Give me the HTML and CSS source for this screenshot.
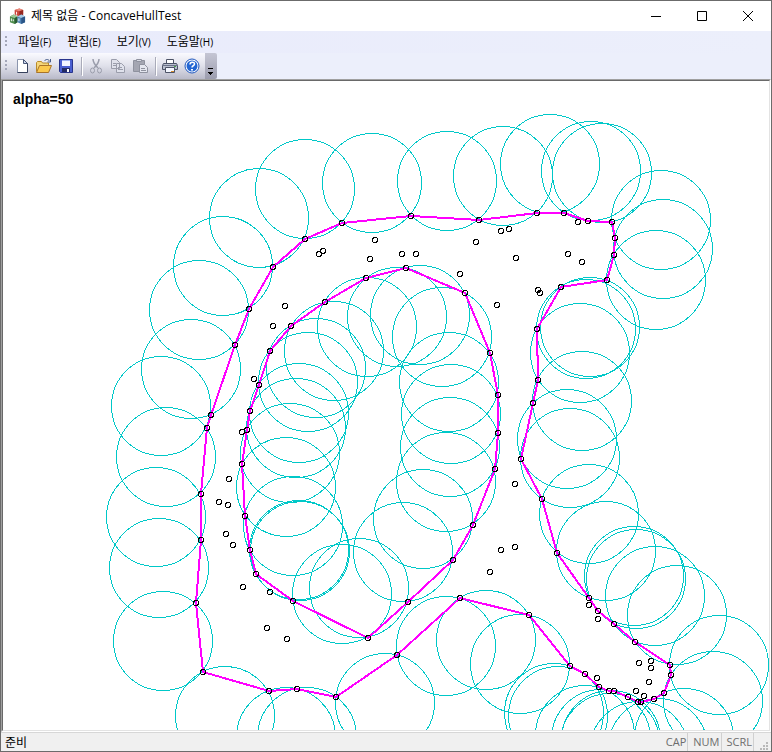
FILE: index.html
```html
<!DOCTYPE html>
<html lang="ko">
<head>
    <meta charset="UTF-8">
    <meta name="viewport" content="width=device-width, initial-scale=1.0">
    <title>제목 없음 - ConcaveHullTest</title>
    <link rel="stylesheet" href="styles.css">
</head>
<body>
    <div class="window">
        <header class="titlebar">
            <svg class="app-icon" viewBox="0 0 18 18" aria-hidden="true">
                <path d="M6 2l5-1.500 4 1.500v5l-4 2-5-2z" fill="#c8453a"/>
                <path d="M6 2l5-1.500 4 1.500-4 1.500z" fill="#e98a7c"/>
                <path d="M11 3.500l4-1.500v5l-4 2z" fill="#96271f"/>
                <path d="M1 9l4-2 4 2v6l-3 2-5-2z" fill="#4d8c4b"/>
                <path d="M1 9l4-2 4 2-3 1.500z" fill="#9cc795"/>
                <path d="M6 10.500l3-1.500v6l-3 2z" fill="#285b32"/>
                <path d="M9 9l4-2 4 2v6l-4 2-4-2z" fill="#4f83b5"/>
                <path d="M9 9l4-2 4 2-4 1.500z" fill="#a8cbe5"/>
                <path d="M13 10.500l4-1.500v6l-4 2z" fill="#2b5688"/>
                <path d="M8 4v3M2.500 11v3M4.500 12v2M10.500 11v3" stroke="#fff" stroke-width="1"/>
            </svg>
            <h1>제목 없음 - ConcaveHullTest</h1>
            <div class="window-buttons">
                <button type="button" aria-label="최소화">
                    <svg viewBox="0 0 10 10"><path d="M0 5.500h10"/></svg>
                </button>
                <button type="button" aria-label="최대화">
                    <svg viewBox="0 0 10 10"><path d="M.5.5h9v9h-9z"/></svg>
                </button>
                <button type="button" aria-label="닫기">
                    <svg viewBox="0 0 10 10"><path d="M0 0l10 10M10 0L0 10"/></svg>
                </button>
            </div>
        </header>

        <nav class="menubar">
            <span class="grip"></span>
            <button type="button">파일<small>(F)</small></button>
            <button type="button">편집<small>(E)</small></button>
            <button type="button">보기<small>(V)</small></button>
            <button type="button">도움말<small>(H)</small></button>
        </nav>

        <div class="toolbar-row">
            <div class="toolbar">
                <span class="grip"></span>
                <button type="button" aria-label="새로 만들기">
                    <svg viewBox="0 0 16 16">
                        <path d="M3.500 1.500h6l4 4v9h-10z" fill="#fff" stroke="#8b95ad"/>
                        <path d="M13.500 5v9.500h-10" fill="none" stroke="#36415c"/>
                        <path d="M9.500 1.500v4h4z" fill="#cbd6ec" stroke="#4a5878"/>
                    </svg>
                </button>
                <button type="button" aria-label="열기">
                    <svg viewBox="0 0 16 16">
                        <path d="M.5 13.500v-9l1-1h4l1 1.500h6v3" fill="#f5d77c" stroke="#b98a2b"/>
                        <path d="M.5 14.500l3-7h12l-3 7z" fill="#fbc94d" stroke="#a8742a"/>
                        <path d="M8.500 3c1-2 4-2 5 0M14.500 1v3h-3" fill="none" stroke="#4a5f8c"/>
                    </svg>
                </button>
                <button type="button" aria-label="저장">
                    <svg viewBox="0 0 16 16">
                        <path d="M1.500 1.500h13v13h-12l-1-1z" fill="#4a5fd0" stroke="#28348c"/>
                        <path d="M4 2h8v6H4z" fill="#f2f5ff"/>
                        <path d="M4 2h8v1H4z" fill="#9fb2f0"/>
                        <path d="M4 10h8v4H4z" fill="#232b63"/>
                        <path d="M9 11h2v3H9z" fill="#fff"/>
                    </svg>
                </button>
                <span class="separator"></span>
                <button type="button" disabled aria-label="잘라내기">
                    <svg viewBox="0 0 16 16" fill="none" stroke="#9a9dab">
                        <path d="M5 1c0 4 2 6 5 9M11 1c0 4-2 6-5 9" stroke-width="1.500"/>
                        <ellipse cx="4.500" cy="12.500" rx="2" ry="2.500"/>
                        <ellipse cx="11.500" cy="12.500" rx="2" ry="2.500"/>
                    </svg>
                </button>
                <button type="button" disabled aria-label="복사">
                    <svg viewBox="0 0 16 16" fill="#e0e2ec" stroke="#9a9dab">
                        <path d="M1.500 1.500h5l3 3v6h-8zM6.500 5.500h5l3 3v6h-8z"/>
                        <path d="M3 5.500h3M3 7.500h3M8 9.500h4M8 11.500h5"/>
                    </svg>
                </button>
                <button type="button" disabled aria-label="붙여넣기">
                    <svg viewBox="0 0 16 16" stroke="#8f929f">
                        <path d="M1.500 2.500h11v11h-11z" fill="#a4a6b2"/>
                        <path d="M4.500 1.500h5v2h-5z" fill="#d8dae4"/>
                        <path d="M7.500 6.500h5l3 3v5h-8z" fill="#e4e6ef"/>
                        <path d="M9 10.500h4M9 12.500h5"/>
                    </svg>
                </button>
                <span class="separator"></span>
                <button type="button" aria-label="인쇄">
                    <svg viewBox="0 0 16 16" stroke="#4c5366">
                        <path d="M4.500 6V1.500h7V6" fill="#fff"/>
                        <path d="M1.500 5.500h13l1 2v4H.5v-4z" fill="#b9bfce"/>
                        <path d="M3.500 9.500h9v5h-9z" fill="#f4f7ff"/>
                        <path d="M1 7.500h14" stroke="#6c7389"/>
                        <path d="M9 13.500h3" stroke="#d38b2f"/>
                        <path d="M12 8.500h2" stroke="#45a045"/>
                    </svg>
                </button>
                <button type="button" aria-label="도움말">
                    <svg viewBox="0 0 16 16">
                        <circle cx="8" cy="8" r="7" fill="#fff" stroke="#1d55bd"/>
                        <circle cx="8" cy="8" r="5.500" fill="#2467d3"/>
                        <path d="M6 6.500c0-3 4.500-3 4.500-.5C10.500 8 8 7.500 8 9.500" fill="none" stroke="#fff" stroke-width="1.500"/>
                        <path d="M7 11h2v1.500H7z" fill="#fff"/>
                    </svg>
                </button>
            </div>
            <button type="button" class="toolbar-more" aria-label="도구 모음 옵션">
                <svg viewBox="0 0 6 7">
                    <path d="M0 0h5v1H0z"/>
                    <path d="M0 4h5v1H4v1H3v1H2V6H1V5H0z"/>
                </svg>
            </button>
        </div>

        <main class="view">
            <svg class="plot" id="plot">
                <text class="alpha" x="10" y="23">alpha=50</text>
                <g id="drawing" transform="translate(-3 -81)"></g>
            </svg>
        </main>

        <footer class="statusbar">
            <span class="message">준비</span>
            <span class="pane">CAP</span>
            <span class="pane">NUM</span>
            <span class="pane">SCRL</span>
            <svg class="size-grip" viewBox="0 0 9 9" aria-hidden="true">
                <path d="M6 0h2v2H6zM3 3h2v2H3zM6 3h2v2H6zM0 6h2v2H0zM3 6h2v2H3zM6 6h2v2H6z"/>
            </svg>
        </footer>
    </div>

    <script src="script.js"></script>
</body>
</html>
```

FILE: styles.css
```css
* {
    margin: 0;
    padding: 0;
    box-sizing: border-box;
}

body {
    font-family: "Open Sans", "Noto Sans CJK KR", sans-serif;
    font-size: 12px;
    color: #000;
}

button {
    border: none;
    background: none;
    font: inherit;
    color: inherit;
}

.window {
    display: flex;
    flex-direction: column;
    min-height: 100vh;
    border: 1px solid #6b6b6b;
    background: #fff;
}

.titlebar {
    display: flex;
    align-items: center;
    height: 30px;
    padding-left: 8px;
}

.app-icon {
    width: 17px;
    height: 17px;
    margin-right: 5px;
}

.titlebar h1 {
    flex: 1;
    font-size: 12px;
    font-weight: normal;
    line-height: 16px;
    white-space: nowrap;
}

.window-buttons {
    display: flex;
}

.window-buttons button {
    display: flex;
    align-items: center;
    justify-content: center;
    width: 46px;
    height: 30px;
}

.window-buttons svg {
    width: 10px;
    height: 10px;
    fill: none;
    stroke: #000;
    overflow: visible;
}

.menubar {
    display: flex;
    align-items: center;
    gap: 16px;
    height: 22px;
    padding-left: 4px;
    background: linear-gradient(90deg, #e9ebfb, #eceffb);
}

.menubar button {
    line-height: 20px;
    white-space: nowrap;
}

.menubar small {
    font-family: "Open Sans", sans-serif;
    font-size: 10px;
}

.grip {
    width: 2px;
    height: 12px;
    background: repeating-linear-gradient(#a3a6b8 0 2px, transparent 2px 4px);
}

.menubar .grip {
    margin-right: -5px;
}

.toolbar-row {
    display: flex;
    height: 26px;
    background: #eceffb;
}

.toolbar {
    display: flex;
    align-items: center;
    padding-left: 4px;
    padding-right: 2px;
    background: linear-gradient(#fafaff, #dfe0ea 50%, #b9bac9);
}

.toolbar .grip {
    margin-right: 4px;
}

.toolbar button {
    display: flex;
    align-items: center;
    justify-content: center;
    width: 22px;
    height: 22px;
}

.toolbar button svg {
    width: 16px;
    height: 16px;
}

.separator {
    width: 1px;
    height: 18px;
    margin: 0 3px 0 4px;
    background: #a9abb9;
    box-shadow: 1px 1px #fff;
}

.toolbar-more {
    display: flex;
    align-items: flex-end;
    justify-content: center;
    width: 12px;
    padding-bottom: 4px;
    border-radius: 0 2px 2px 0;
    background: linear-gradient(#c5c6d4, #9c9dae);
}

.toolbar-more svg {
    width: 6px;
    height: 7px;
}

.view {
    display: flex;
    flex: 1;
    border: 1px solid #a0a0a0;
    border-right-color: #fff;
    border-bottom-color: #fff;
}

.plot {
    flex: 1;
    height: auto;
    min-height: 648px;
    border: 1px solid #696969;
    border-right-color: #e3e3e3;
    border-bottom-color: #e3e3e3;
    shape-rendering: crispEdges;
}

.alpha {
    font-family: "Liberation Sans", Arial, sans-serif;
    font-size: 14px;
    font-weight: bold;
}

.alpha-circle {
    fill: none;
    stroke: #00c8c8;
}

.hull {
    fill: none;
    stroke: #f0f;
    stroke-width: 2px;
}

.point {
    fill: none;
    stroke: #000;
}

.statusbar {
    display: flex;
    align-items: center;
    height: 19px;
    padding-left: 4px;
    padding-right: 2px;
    border-top: 1px solid #d7d7d7;
    background: #f0f0f0;
}

.message {
    flex: 1;
}

.pane {
    padding: 0 1px 0 5px;
    border-right: 1px solid #d0d0d0;
    font-size: 11px;
    line-height: 18px;
    color: #6d6d6d;
}

.size-grip {
    align-self: flex-end;
    width: 9px;
    height: 9px;
    margin-left: 6px;
    fill: #b8b8b8;
}
```

FILE: script.js
```javascript
const SVG_NS = 'http://www.w3.org/2000/svg';
const ALPHA = 50;

const outerHull = [
    [342, 223], [411, 216], [479, 220], [537, 213], [564, 213], [588, 221], [612, 222],
    [615, 238], [614, 255], [607, 280], [561, 287], [537, 329], [538, 380], [533, 403],
    [521, 459], [542, 499], [557, 553], [589, 598], [598, 611], [614, 624], [635, 642],
    [670, 665], [671, 675], [664, 693], [654, 699], [641, 702], [638, 702], [628, 697],
    [614, 691], [609, 691], [599, 687], [585, 674], [570, 666], [529, 615], [460, 598],
    [397, 655], [336, 697], [297, 689], [269, 691], [203, 672], [196, 603], [201, 540],
    [201, 494], [207, 428], [211, 415], [235, 345], [249, 309], [273, 267], [305, 239]
];

const innerHull = [
    [406, 268], [366, 278], [325, 302], [291, 326], [270, 351], [259, 385], [250, 411],
    [247, 430], [242, 464], [245, 516], [250, 550], [256, 574], [293, 601], [368, 638],
    [408, 602], [453, 560], [473, 525], [495, 469], [498, 433], [498, 395], [490, 353],
    [465, 293]
];

const innerPoints = [
    [319, 254], [323, 251], [375, 240], [370, 259], [402, 254], [416, 254], [476, 242],
    [501, 231], [509, 229], [516, 258], [460, 274], [497, 305], [538, 290], [540, 293],
    [568, 254], [582, 262], [578, 222], [285, 306], [273, 326], [254, 379], [242, 432],
    [229, 479], [219, 502], [228, 505], [226, 534], [233, 545], [243, 587], [270, 592],
    [267, 628], [287, 639], [515, 484], [515, 547], [501, 550], [490, 572], [589, 605],
    [598, 619], [639, 663], [651, 661], [651, 668], [649, 682], [636, 691], [644, 696],
    [597, 678]
];

const drawing = document.getElementById('drawing');

function add(name, attrs) {
    const el = document.createElementNS(SVG_NS, name);
    for (const key in attrs) {
        el.setAttribute(key, attrs[key]);
    }
    drawing.appendChild(el);
}

// Circle of radius alpha through both ends of an edge, on the empty side
function circleCenter(a, b) {
    const dx = b[0] - a[0];
    const dy = b[1] - a[1];
    const length = Math.hypot(dx, dy);
    const height = Math.sqrt(ALPHA * ALPHA - length * length / 4);
    return [
        Math.floor((a[0] + b[0]) / 2 + dy / length * height),
        Math.floor((a[1] + b[1]) / 2 - dx / length * height)
    ];
}

const hulls = [outerHull, innerHull];

hulls.forEach(hull => {
    hull.forEach((point, i) => {
        const [cx, cy] = circleCenter(point, hull[(i + 1) % hull.length]);
        add('circle', { class: 'alpha-circle', cx, cy, r: ALPHA - 0.5 });
    });
});

hulls.forEach(hull => {
    add('polygon', { class: 'hull', points: hull.join(' ') });
});

[...outerHull, ...innerHull, ...innerPoints].forEach(([cx, cy]) => {
    add('circle', { class: 'point', cx, cy, r: 2.5 });
});
```
